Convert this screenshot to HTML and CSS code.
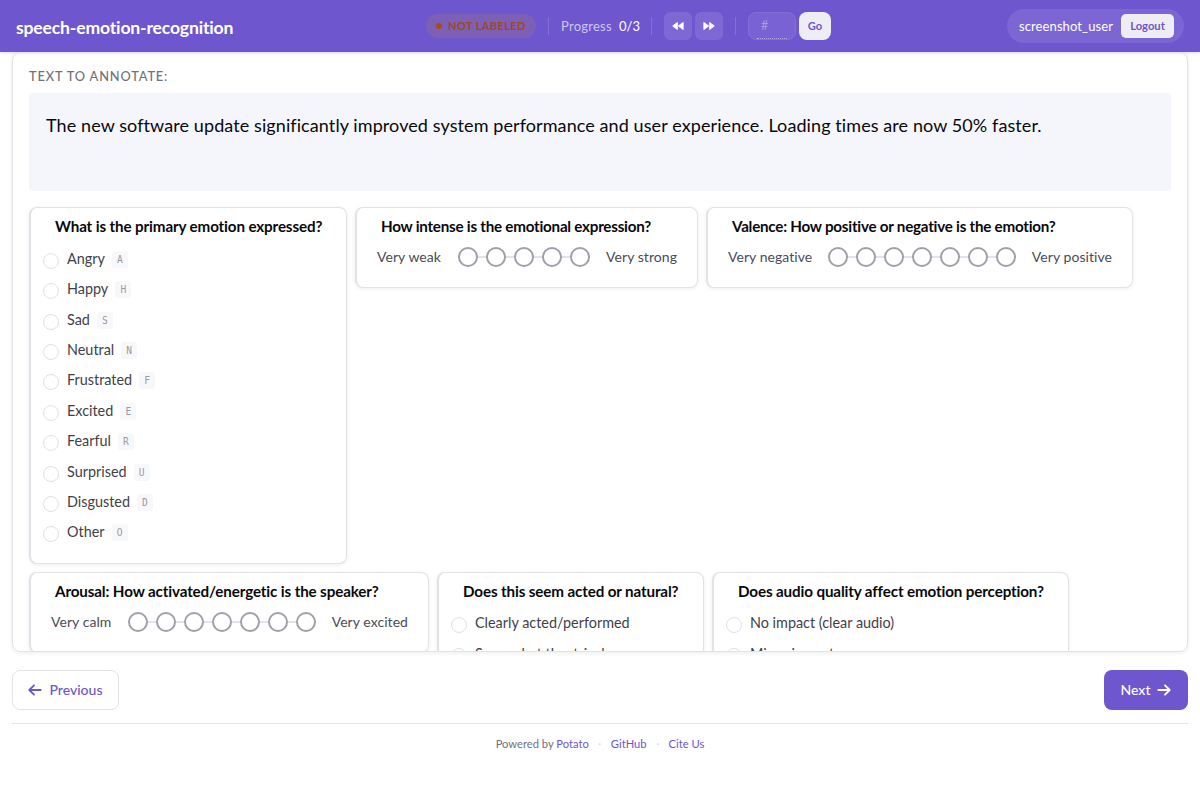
FILE: index.html
```html
<!DOCTYPE html>
<html lang="en">
<head>
  <meta charset="UTF-8" />
  <meta name="viewport" content="width=device-width, initial-scale=1.0" />
  <title>speech-emotion-recognition</title>
  <link rel="stylesheet" href="styles.css">
</head>
<body>
  <header class="navbar">
    <div class="brand">speech-emotion-recognition</div>
    <div class="status-group">
      <span class="status-badge"><span class="status-dot"></span><span>NOT LABELED</span></span>
      <span class="divider divider-first"></span>
      <span class="progress-label">Progress</span>
      <span class="progress-count">0/3</span>
      <span class="divider"></span>
      <button class="icon-btn" aria-label="First">
        <svg width="12" height="10" viewBox="0 0 12 10"><path d="M5.4 1.4v7.2L0.6 5zM11.2 1.4v7.2L6.2 5z" fill="#fff" stroke="#fff" stroke-width="0.8" stroke-linejoin="round"/></svg>
      </button>
      <button class="icon-btn icon-btn-next" aria-label="Last">
        <svg width="12" height="10" viewBox="0 0 12 10"><path d="M0.8 1.4v7.2L5.8 5zM6.6 1.4v7.2L11.4 5z" fill="#fff" stroke="#fff" stroke-width="0.8" stroke-linejoin="round"/></svg>
      </button>
      <span class="divider divider-last"></span>
      <span class="goto-box"><span class="goto-hint">#</span></span>
      <button class="go-btn">Go</button>
    </div>
    <div class="user-pill">
      <span class="user-name">screenshot_user</span>
      <button class="logout-btn">Logout</button>
    </div>
  </header>

  <main class="panel">
    <div class="panel-heading">TEXT TO ANNOTATE:</div>
    <div class="instance-text">The new software update significantly improved system performance and user experience. Loading times are now 50% faster.</div>

    <div class="schemas">
      <section class="card card-primary">
        <h3>What is the primary emotion expressed?</h3>
        <div class="options">
          <label class="option"><span class="radio"></span><span>Angry</span><kbd>A</kbd></label>
          <label class="option"><span class="radio"></span><span>Happy</span><kbd>H</kbd></label>
          <label class="option"><span class="radio"></span><span>Sad</span><kbd>S</kbd></label>
          <label class="option"><span class="radio"></span><span>Neutral</span><kbd>N</kbd></label>
          <label class="option"><span class="radio"></span><span>Frustrated</span><kbd>F</kbd></label>
          <label class="option"><span class="radio"></span><span>Excited</span><kbd>E</kbd></label>
          <label class="option"><span class="radio"></span><span>Fearful</span><kbd>R</kbd></label>
          <label class="option"><span class="radio"></span><span>Surprised</span><kbd>U</kbd></label>
          <label class="option"><span class="radio"></span><span>Disgusted</span><kbd>D</kbd></label>
          <label class="option"><span class="radio"></span><span>Other</span><kbd>O</kbd></label>
        </div>
      </section>

      <section class="card card-intensity">
        <h3>How intense is the emotional expression?</h3>
        <div class="likert">
          <span>Very weak</span>
          <div class="scale"><i></i><i></i><i></i><i></i><i></i></div>
          <span>Very strong</span>
        </div>
      </section>

      <section class="card card-valence">
        <h3>Valence: How positive or negative is the emotion?</h3>
        <div class="likert">
          <span>Very negative</span>
          <div class="scale"><i></i><i></i><i></i><i></i><i></i><i></i><i></i></div>
          <span>Very positive</span>
        </div>
      </section>

      <section class="card card-arousal">
        <h3>Arousal: How activated/energetic is the speaker?</h3>
        <div class="likert">
          <span>Very calm</span>
          <div class="scale"><i></i><i></i><i></i><i></i><i></i><i></i><i></i></div>
          <span>Very excited</span>
        </div>
      </section>

      <section class="card card-acted">
        <h3>Does this seem acted or natural?</h3>
        <div class="options options-plain">
          <label class="option"><span class="radio"></span><span>Clearly acted/performed</span></label>
          <label class="option"><span class="radio"></span><span>Somewhat theatrical</span></label>
        </div>
      </section>

      <section class="card card-quality">
        <h3>Does audio quality affect emotion perception?</h3>
        <div class="options options-plain">
          <label class="option"><span class="radio"></span><span>No impact (clear audio)</span></label>
          <label class="option"><span class="radio"></span><span>Minor impact</span></label>
        </div>
      </section>
    </div>
  </main>

  <nav class="page-nav">
    <button class="nav-btn prev-btn">
      <svg width="14" height="12" viewBox="0 0 14 12"><path d="M12.7 6H1.6M6 1.3L1.3 6L6 10.7" fill="none" stroke="currentColor" stroke-width="1.8" stroke-linecap="round" stroke-linejoin="round"/></svg>
      <span>Previous</span>
    </button>
    <button class="nav-btn next-btn">
      <span>Next</span>
      <svg width="14" height="12" viewBox="0 0 14 12"><path d="M1.3 6H12.4M8 1.3L12.7 6L8 10.7" fill="none" stroke="currentColor" stroke-width="1.8" stroke-linecap="round" stroke-linejoin="round"/></svg>
    </button>
  </nav>

  <footer class="footer">
    <span>Powered by <a>Potato</a></span>
    <span class="dot">·</span>
    <a>GitHub</a>
    <span class="dot">·</span>
    <a>Cite Us</a>
  </footer>
</body>
</html>
```
FILE: styles.css
```css
* {
  box-sizing: border-box;
}

body {
  margin: 0;
  height: 800px;
  overflow: hidden;
  font-family: Lato, "Liberation Sans", sans-serif;
  background-color: #fff;
  color: #09090b;
}

button {
  font-family: inherit;
  border: none;
  padding: 0;
  cursor: pointer;
}

/* Top bar */
.navbar {
  height: 52px;
  padding: 0 16px;
  display: flex;
  align-items: center;
  background-color: #6e56cf;
  color: #fff;
  box-shadow: 0 1px 3px rgba(0, 0, 0, 0.15);
}

.brand {
  width: 410px;
  padding-top: 2px;
  font-size: 17.6px;
  font-weight: 700;
  letter-spacing: -0.18px;
}

.status-group {
  display: flex;
  align-items: center;
}

.status-badge {
  width: 110px;
  height: 24px;
  padding: 0 0 2px 10px;
  display: flex;
  align-items: center;
  gap: 6px;
  border-radius: 12px;
  background-color: #7d5fb6;
  color: #9c4a22;
  font-size: 11px;
  font-weight: 700;
  letter-spacing: 0.4px;
}

.status-dot {
  width: 6px;
  height: 6px;
  margin-top: 2px;
  border-radius: 50%;
  background-color: #a34d1c;
}

.divider {
  width: 1px;
  height: 18px;
  margin: 0 12px 0 11px;
  background-color: #846fd7;
}

.divider-first,
.divider-last {
  margin-left: 12px;
}

.progress-label {
  width: 58px;
  font-size: 13px;
  letter-spacing: 0.25px;
  color: #cdc5ef;
}

.progress-count {
  width: 21px;
  font-size: 13px;
}

.icon-btn {
  width: 28px;
  height: 28px;
  display: flex;
  align-items: center;
  justify-content: center;
  border-radius: 6px;
  background-color: #7d68d4;
}

.icon-btn-next {
  margin-left: 3px;
}

.goto-box {
  width: 48px;
  height: 28px;
  display: flex;
  align-items: center;
  justify-content: center;
  padding: 0 8px;
  border: 1px solid #8270d7;
  border-radius: 8px;
  background-color: #7962d3;
}

.goto-hint {
  width: 32px;
  height: 26px;
  padding-left: 4px;
  border-bottom: 1px dotted #b5a9e5;
  font-size: 12.5px;
  line-height: 26px;
  color: #a99bdf;
}

.go-btn {
  width: 32px;
  height: 28px;
  margin-left: 3px;
  padding-bottom: 2px;
  border-radius: 8px;
  background-color: #eeedf4;
  color: #6e56cf;
  font-size: 11.2px;
  font-weight: 700;
}

.user-pill {
  width: 177px;
  height: 34px;
  margin-left: auto;
  padding: 0 10px 0 12px;
  display: flex;
  align-items: center;
  justify-content: space-between;
  border-radius: 17px;
  background-color: #7c66d4;
}

.user-name {
  font-size: 13px;
  letter-spacing: 0.1px;
}

.logout-btn {
  width: 53px;
  height: 24px;
  padding-bottom: 2px;
  border-radius: 5px;
  background-color: #eeedf4;
  color: #6e56cf;
  font-size: 11.2px;
  font-weight: 700;
}

/* Annotation panel */
.panel {
  height: 600px;
  margin: 0 12px;
  padding: 0 16px;
  overflow: hidden;
  border: 1px solid #e2e2e8;
  border-radius: 8px;
  box-shadow: 0 1px 4px rgba(0, 0, 0, 0.08);
}

.panel-heading {
  height: 40px;
  padding-top: 15px;
  font-size: 12.8px;
  line-height: 16px;
  letter-spacing: 0.86px;
  font-weight: 500;
  color: #71717a;
}

.instance-text {
  height: 98px;
  padding: 19px 17px;
  border-radius: 4px;
  background-color: #f5f6fb;
  font-size: 18px;
  line-height: 26px;
  letter-spacing: 0.09px;
  white-space: nowrap;
  color: #09090b;
}

.schemas {
  margin-top: 16px;
  display: flex;
  flex-wrap: wrap;
  align-items: flex-start;
  gap: 8px;
}

.card {
  padding: 0 12px;
  border: 1px solid #e2e2e8;
  border-left-width: 2px;
  border-radius: 8px;
  background-color: #fff;
  box-shadow: 0 1px 4px rgba(0, 0, 0, 0.07);
}

.card h3 {
  margin: 8px 0 0 12px;
  font-size: 15.2px;
  line-height: 20px;
  font-weight: 700;
  letter-spacing: -0.13px;
  white-space: nowrap;
}

.card-primary {
  width: 318px;
  height: 357px;
}

.card-intensity {
  width: 343px;
  height: 81px;
}

.card-valence {
  width: 427px;
  height: 81px;
}

.card-intensity h3,
.card-valence h3 {
  letter-spacing: -0.24px;
}

.card-arousal {
  width: 400px;
  height: 81px;
}

.card-acted {
  width: 267px;
  height: 160px;
}

.card-quality {
  width: 357px;
  height: 160px;
}

.options {
  margin-top: 7.6px;
}

.option {
  height: 30.4px;
  display: flex;
  align-items: center;
  font-size: 14.4px;
  line-height: 20px;
  color: #3f3f4a;
  white-space: nowrap;
}

.radio {
  width: 16px;
  height: 16px;
  margin: 4px 8px 0 0;
  border: 1px solid #e0e0e6;
  border-radius: 50%;
}

.options-plain {
  margin-top: 6.5px;
}

.options-plain .option {
  height: 31px;
}

.options-plain .radio {
  margin-top: 4px;
}

kbd {
  width: 16px;
  height: 17px;
  margin: 1px 0 0 7px;
  border-radius: 3px;
  background-color: #f8f8fa;
  color: #9a9aa6;
  font-family: "DejaVu Sans Mono", monospace;
  font-size: 9.6px;
  line-height: 17px;
  text-align: center;
}

.likert {
  height: 20px;
  margin-top: 11px;
  padding: 0 8px;
  display: flex;
  align-items: center;
  justify-content: space-between;
  font-size: 14px;
  line-height: 18px;
  white-space: nowrap;
  color: #4b4b57;
}

.likert > span {
  padding-bottom: 1px;
  letter-spacing: 0.06px;
}

.scale {
  display: flex;
  gap: 8px;
  background: linear-gradient(#e2e2e8, #e2e2e8) center / 100% 2px no-repeat;
}

.scale i {
  width: 20px;
  height: 20px;
  border: 2px solid #9fa0ab;
  border-radius: 50%;
  background-color: #fff;
}

/* Bottom navigation */
.page-nav {
  height: 72px;
  margin: 0 12px;
  padding-top: 18px;
  display: flex;
  justify-content: space-between;
  border-bottom: 1px solid #e4e4e7;
}

.nav-btn {
  height: 40px;
  display: flex;
  align-items: center;
  justify-content: center;
  gap: 7px;
  border-radius: 8px;
  font-size: 14px;
  font-weight: 500;
}

.nav-btn span {
  padding-bottom: 2px;
}

.prev-btn {
  width: 107px;
  border: 1px solid #e4e4e7;
  background-color: #fff;
  color: #6e56cf;
}

.next-btn {
  width: 84px;
  background-color: #6e56cf;
  color: #fff;
}

.footer {
  margin-top: 12px;
  display: flex;
  justify-content: center;
  font-size: 11.2px;
  line-height: 16px;
  color: #71717a;
}

.footer a {
  color: #6e56cf;
}

.footer .dot {
  width: 22px;
  text-align: center;
  color: #d8d8de;
}
```
